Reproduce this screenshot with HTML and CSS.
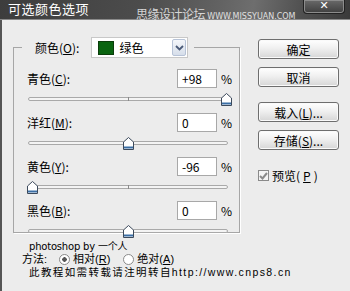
FILE: index.html
```html
<!DOCTYPE html>
<html lang="zh-CN">
<head>
  <meta charset="UTF-8">
  <title>可选颜色选项</title>
  <link rel="stylesheet" href="styles.css">
</head>
<body>
  <div class="window">
    <div class="titlebar">
      <span class="title">可选颜色选项</span>
      <span class="watermark">思缘设计论坛 <small>WWW.MISSYUAN.COM</small></span>
      <span class="close">✕</span>
    </div>

    <div class="dialog">
      <div class="main">
        <fieldset class="group">
          <legend>
            <span class="label">颜色(<u>O</u>):</span>
            <span class="select">
              <span class="swatch"></span>
              <span class="select-text">绿色</span>
              <span class="select-btn">
                <svg width="9" height="6" viewBox="0 0 9 6"><path d="M1 1 L4.5 4.5 L8 1" fill="none" stroke="#4a5a78" stroke-width="1.8"/></svg>
              </span>
            </span>
          </legend>

          <div class="row">
            <div class="row-head">
              <span class="label">青色(<u>C</u>):</span>
              <span class="input">+98</span>
              <span class="pct">%</span>
            </div>
            <div class="slider"><span class="track"><i class="tick"></i></span>
              <svg class="thumb" style="left: 193px" width="11" height="13" viewBox="0 0 11 13"><path d="M5.5 0.5 L10.5 5 L10.5 12.5 L0.5 12.5 L0.5 5 Z" fill="#fff" stroke="#3c4a5c"/><path d="M1 10.5 H10" stroke="#3a6ea5" stroke-width="2"/></svg>
            </div>
          </div>

          <div class="row">
            <div class="row-head">
              <span class="label">洋红(<u>M</u>):</span>
              <span class="input">0</span>
              <span class="pct">%</span>
            </div>
            <div class="slider"><span class="track"><i class="tick"></i></span>
              <svg class="thumb" style="left: 95px" width="11" height="13" viewBox="0 0 11 13"><path d="M5.5 0.5 L10.5 5 L10.5 12.5 L0.5 12.5 L0.5 5 Z" fill="#fff" stroke="#3c4a5c"/><path d="M1 10.5 H10" stroke="#3a6ea5" stroke-width="2"/></svg>
            </div>
          </div>

          <div class="row">
            <div class="row-head">
              <span class="label">黄色(<u>Y</u>):</span>
              <span class="input">-96</span>
              <span class="pct">%</span>
            </div>
            <div class="slider"><span class="track"><i class="tick"></i></span>
              <svg class="thumb" style="left: -1px" width="11" height="13" viewBox="0 0 11 13"><path d="M5.5 0.5 L10.5 5 L10.5 12.5 L0.5 12.5 L0.5 5 Z" fill="#fff" stroke="#3c4a5c"/><path d="M1 10.5 H10" stroke="#3a6ea5" stroke-width="2"/></svg>
            </div>
          </div>

          <div class="row">
            <div class="row-head">
              <span class="label">黑色(<u>B</u>):</span>
              <span class="input">0</span>
              <span class="pct">%</span>
            </div>
            <div class="slider"><span class="track"><i class="tick"></i></span>
              <svg class="thumb" style="left: 95px" width="11" height="13" viewBox="0 0 11 13"><path d="M5.5 0.5 L10.5 5 L10.5 12.5 L0.5 12.5 L0.5 5 Z" fill="#fff" stroke="#3c4a5c"/><path d="M1 10.5 H10" stroke="#3a6ea5" stroke-width="2"/></svg>
            </div>
          </div>
        </fieldset>

        <div class="footer">
          <div class="line credit">photoshop by 一个人</div>
          <div class="line method">
            <span>方法:</span>
            <span class="radio checked"></span><span>相对(<u>R</u>)</span>
            <span class="radio second"></span><span>绝对(<u>A</u>)</span>
          </div>
          <div class="line notice">此教程如需转载请注明转自http://www.cnps8.cn</div>
        </div>
      </div>

      <div class="side">
        <button class="btn">确定</button>
        <button class="btn">取消</button>
        <button class="btn btn-gap">载入(<u>L</u>)...</button>
        <button class="btn">存储(<u>S</u>)...</button>
        <label class="check">
          <span class="box">
            <svg width="9" height="8" viewBox="0 0 9 8"><path d="M1 4 L3.5 6.5 L8 1" fill="none" stroke="#8a8a8a" stroke-width="2"/></svg>
          </span>
          预览(<u>P</u>)
        </label>
      </div>
    </div>
  </div>
</body>
</html>
```

FILE: styles.css
```css
* {
  margin: 0;
  padding: 0;
  box-sizing: border-box;
}

body {
  width: 350px;
  height: 291px;
  overflow: hidden;
  font-family: "Noto Sans CJK SC", "Liberation Sans", sans-serif;
  font-size: 12px;
  color: #000;
  background: #ececec;
}

u {
  text-decoration: underline;
  text-underline-offset: 1px;
}

.window {
  height: 291px;
  display: flex;
  flex-direction: column;
}

.titlebar {
  position: relative;
  height: 20px;
  flex: none;
  display: flex;
  align-items: flex-start;
  background: linear-gradient(100deg, #3d3d3d 0%, #4c4c4c 40%, #626262 62%, #6e6e6e 72%, #505050 86%, #3a3a3a 100%);
  border-bottom: 1px solid #8a8a8a;
  color: #fff;
}

.title {
  font-size: 13px;
  line-height: 18px;
  padding-left: 8px;
  letter-spacing: 0.5px;
}

.watermark {
  margin-left: 47px;
  margin-top: 7px;
  font-size: 12px;
  line-height: 13px;
  color: #d6d6d6;
  letter-spacing: -0.5px;
}

.watermark small {
  font-family: "DejaVu Sans", sans-serif;
  font-size: 8px;
  letter-spacing: 0;
  color: #e0e0e0;
}

.close {
  position: absolute;
  left: 303px;
  top: 0;
  width: 42px;
  height: 14px;
  border: 1px solid #222;
  border-top: none;
  border-radius: 0 0 4px 4px;
  background: linear-gradient(#6a6a6a, #3e3e3e);
  box-shadow: inset 0 0 0 1px #8c8c8c;
  font-family: "DejaVu Sans", sans-serif;
  font-size: 11px;
  font-weight: bold;
  line-height: 12px;
  text-align: center;
}

.dialog {
  flex: 1;
  display: flex;
  border-left: 2px solid #555;
}

.main {
  width: 256px;
}

.group {
  margin: 17px 0 0 11px;
  width: 227px;
  height: 196px;
  border: 1px solid #a6a6a6;
  box-shadow: 1px 1px 0 #fff;
  padding: 0 0 0 13px;
}

.group legend {
  margin-left: -5px;
  padding: 0 6px 0 13px;
  display: flex;
  align-items: center;
  height: 21px;
}

.select {
  margin-left: 12px;
  width: 97px;
  height: 21px;
  display: flex;
  align-items: center;
  background: #fff;
  border: 1px solid #c8c8c8;
}

.swatch {
  width: 16px;
  height: 14px;
  margin-left: 6px;
  background: #0a6410;
  border: 1px solid #0b3d0b;
}

.select-text {
  margin-left: 5px;
  flex: 1;
}

.select-btn {
  width: 14px;
  height: 17px;
  margin-right: 1px;
  display: flex;
  align-items: center;
  justify-content: center;
  border: 1px solid #b7c3d7;
  border-radius: 2px;
  background: linear-gradient(#f4f6fa, #d6deea);
}

.row {
  width: 200px;
}

.row:first-of-type {
  margin-top: 11px;
}

.row-head {
  display: grid;
  grid-template-columns: 146px 40px auto;
  column-gap: 4px;
  align-items: center;
  height: 19px;
}

.input {
  height: 19px;
  line-height: 17px;
  padding-left: 4px;
  background: #fff;
  border: 1px solid #a8a8a8;
}

.slider {
  position: relative;
  height: 25px;
  margin-left: 1px;
}

.track {
  position: absolute;
  left: 0;
  top: 9px;
  width: 200px;
  height: 4px;
  border: 1px solid #a9a9a9;
  border-radius: 2px;
  background: #f4f4f4;
}

.tick {
  position: absolute;
  left: 99px;
  top: -1px;
  width: 1px;
  height: 4px;
  background: #8a8a8a;
}

.thumb {
  position: absolute;
  top: 5px;
}

.footer {
  margin: 7px 0 0 20px;
  font-family: "Liberation Sans", "Noto Sans CJK SC", sans-serif;
}

.line {
  height: 13px;
  line-height: 13px;
  white-space: nowrap;
}

.credit {
  margin-left: 7px;
  font-size: 10px;
  font-family: "DejaVu Sans", "Noto Sans CJK SC", sans-serif;
  letter-spacing: -0.2px;
}

.method {
  display: flex;
  align-items: center;
  font-size: 11px;
}

.radio {
  width: 11px;
  height: 11px;
  margin: 0 3px 0 12px;
  border: 1px solid #8a8a8a;
  border-radius: 50%;
  background: #fff;
  flex: none;
}

.radio.checked {
  background: radial-gradient(circle, #555 0 2px, #fff 2.5px);
}

.radio.second {
  margin-left: 13px;
}

.notice {
  margin-left: 7px;
  font-size: 10.5px;
  letter-spacing: 1.4px;
}

.side {
  padding: 19px 0 0 0;
  display: flex;
  flex-direction: column;
  align-items: flex-start;
}

.btn {
  width: 81px;
  height: 20px;
  margin-bottom: 8px;
  font-family: inherit;
  font-size: 12px;
  color: #000;
  border: 1px solid #6e6e6e;
  border-radius: 3px;
  background: linear-gradient(#ffffff, #f0f0f0 45%, #d6d6d6 100%);
  box-shadow: inset 0 0 0 1px #fafafa;
}

.btn-gap {
  margin-top: 7px;
}

.check {
  display: flex;
  align-items: center;
  margin-top: 9px;
  gap: 3px;
}

.box {
  width: 11px;
  height: 11px;
  border: 1px solid #8a8a8a;
  background: #f4f4f4;
  display: flex;
  align-items: center;
  justify-content: center;
}
```
